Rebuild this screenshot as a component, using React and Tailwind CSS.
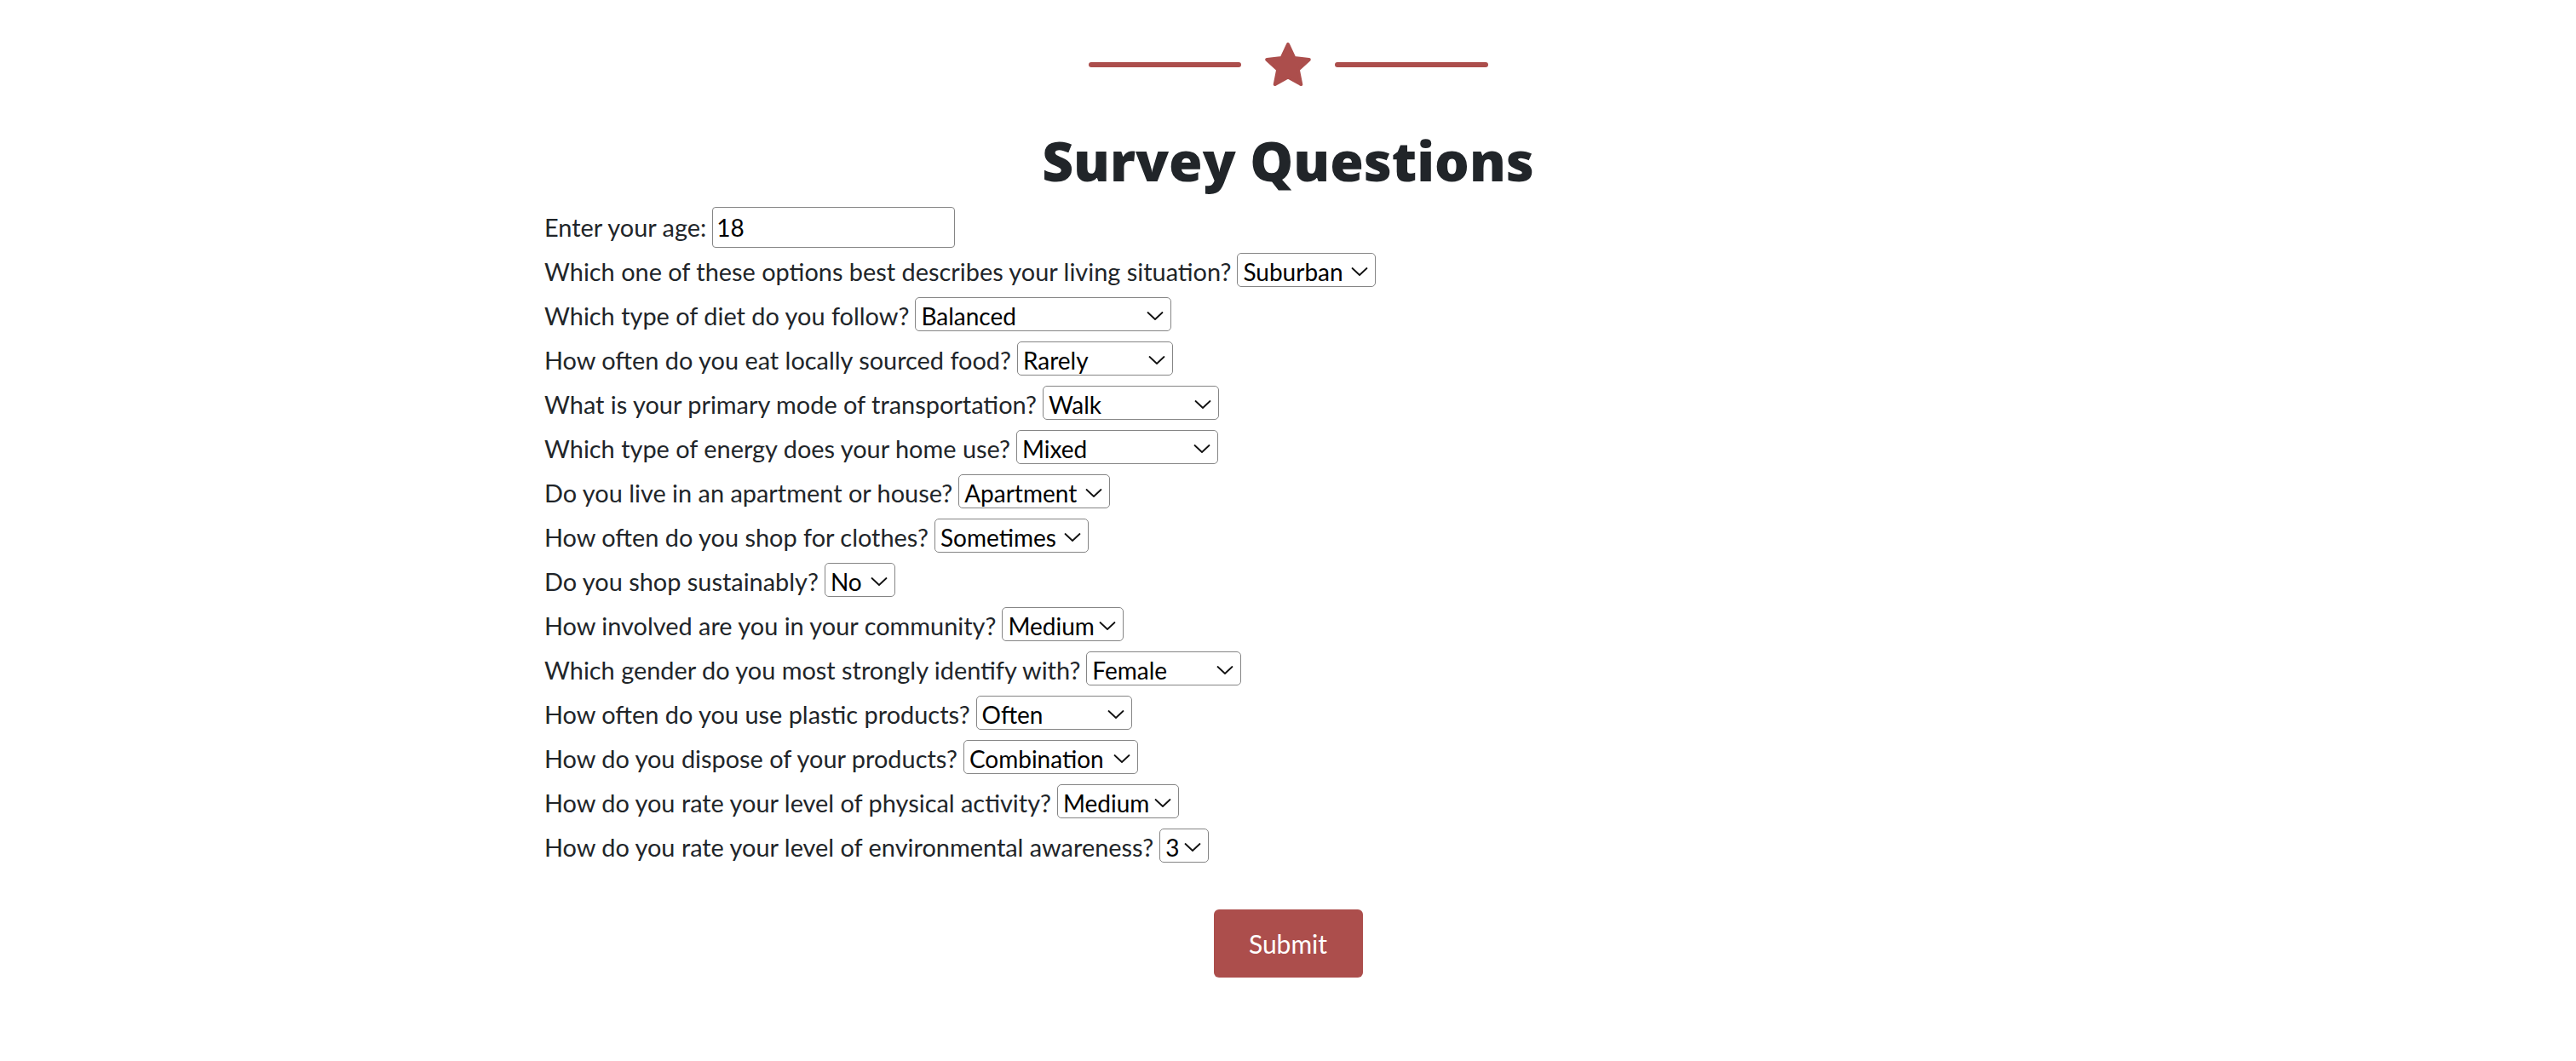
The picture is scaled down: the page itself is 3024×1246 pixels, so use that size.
import React from "react";

const RED = "#ac4e4c";

function Star() {
  const R = 26;
  const r = R * 0.48;
  const cx = 27;
  const cy = 28;
  const pts = [];
  for (let i = 0; i < 10; i++) {
    const a = ((-90 + i * 36) * Math.PI) / 180;
    const rad = i % 2 === 0 ? R : r;
    pts.push(`${(cx + rad * Math.cos(a)).toFixed(2)},${(cy + rad * Math.sin(a)).toFixed(2)}`);
  }
  return (
    <svg width="54" height="51" viewBox="0 0 54 51">
      <polygon points={pts.join(" ")} fill={RED} stroke={RED} strokeWidth="4" strokeLinejoin="round" />
    </svg>
  );
}

function Chevron() {
  return (
    <svg
      className="pointer-events-none absolute right-[9px] top-1/2 -translate-y-1/2"
      width="20"
      height="11"
      viewBox="0 0 20 11"
    >
      <polyline points="1.5,1.5 10,9.5 18.5,1.5" fill="none" stroke="#111" strokeWidth="1.8" strokeLinecap="round" strokeLinejoin="round" />
    </svg>
  );
}

const questions = [
  { label: "Which one of these options best describes your living situation?", value: "Suburban", options: ["Urban", "Suburban", "Rural"], w: "w-[163px]" },
  { label: "Which type of diet do you follow?", value: "Balanced", options: ["Balanced", "Vegetarian", "Vegan", "Pescatarian", "Meat-heavy"], w: "w-[301px]" },
  { label: "How often do you eat locally sourced food?", value: "Rarely", options: ["Never", "Rarely", "Sometimes", "Often"], w: "w-[183px]" },
  { label: "What is your primary mode of transportation?", value: "Walk", options: ["Walk", "Bike", "Car", "Public Transport"], w: "w-[207px]" },
  { label: "Which type of energy does your home use?", value: "Mixed", options: ["Mixed", "Renewable", "Non-renewable"], w: "w-[237px]" },
  { label: "Do you live in an apartment or house?", value: "Apartment", options: ["Apartment", "House"], w: "w-[178px]" },
  { label: "How often do you shop for clothes?", value: "Sometimes", options: ["Rarely", "Sometimes", "Often"], w: "w-[181px]" },
  { label: "Do you shop sustainably?", value: "No", options: ["Yes", "No"], w: "w-[83px]" },
  { label: "How involved are you in your community?", value: "Medium", options: ["Low", "Medium", "High"], w: "w-[143px]" },
  { label: "Which gender do you most strongly identify with?", value: "Female", options: ["Female", "Male", "Non-binary", "Other"], w: "w-[182px]" },
  { label: "How often do you use plastic products?", value: "Often", options: ["Rarely", "Sometimes", "Often"], w: "w-[183px]" },
  { label: "How do you dispose of your products?", value: "Combination", options: ["Recycle", "Trash", "Compost", "Combination"], w: "w-[205px]" },
  { label: "How do you rate your level of physical activity?", value: "Medium", options: ["Low", "Medium", "High"], w: "w-[143px]" },
  { label: "How do you rate your level of environmental awareness?", value: "3", options: ["1", "2", "3", "4", "5"], w: "w-[58px]" },
];

export default function App() {
  return (
    <div className="min-h-[1246px] bg-white" style={{ fontFamily: "Lato, 'Open Sans', sans-serif" }}>
      <div className="mt-[50px] flex h-[51px] items-center justify-center">
        <div className="h-[6px] w-[179px] rounded-full bg-[#ac4e4c]" />
        <div className="mx-[28px] flex">
          <Star />
        </div>
        <div className="h-[6px] w-[180px] rounded-full bg-[#ac4e4c]" />
      </div>
      <h1
        className="mt-[56px] text-center text-[64px] font-extrabold leading-none text-[#212529]"
        style={{ fontFamily: "'Open Sans', Lato, sans-serif" }}
      >
        Survey Questions
      </h1>
      <form className="mx-auto mt-[20px] w-[1746px] text-[28.9px] text-[#212529]" onSubmit={(e) => e.preventDefault()}>
        <div className="flex h-[52px] items-center">
          <label className="mr-[7px]">Enter your age:</label>
          <input
            type="number"
            defaultValue="18"
            className="h-[48px] w-[285px] rounded-[4px] border border-[#858585] px-[4px] text-[28px] text-black outline-none"
          />
        </div>
        {questions.map((q, i) => (
          <div key={i} className="flex h-[52px] items-center">
            <label className="mr-[7px] whitespace-nowrap">{q.label}</label>
            <div className="relative">
              <select
                defaultValue={q.value}
                className={`h-[40px] ${q.w} appearance-none rounded-[5px] border border-[#858585] bg-white pl-[6px] text-[28px] text-black outline-none`}
              >
                {q.options.map((o) => (
                  <option key={o} value={o}>
                    {o}
                  </option>
                ))}
              </select>
              <Chevron />
            </div>
          </div>
        ))}
        <div className="mt-[47px] flex justify-center">
          <button
            type="submit"
            className="h-[80px] w-[175px] rounded-[6px] bg-[#ac4e4c] text-[30px] text-white"
          >
            Submit
          </button>
        </div>
      </form>
    </div>
  );
}
